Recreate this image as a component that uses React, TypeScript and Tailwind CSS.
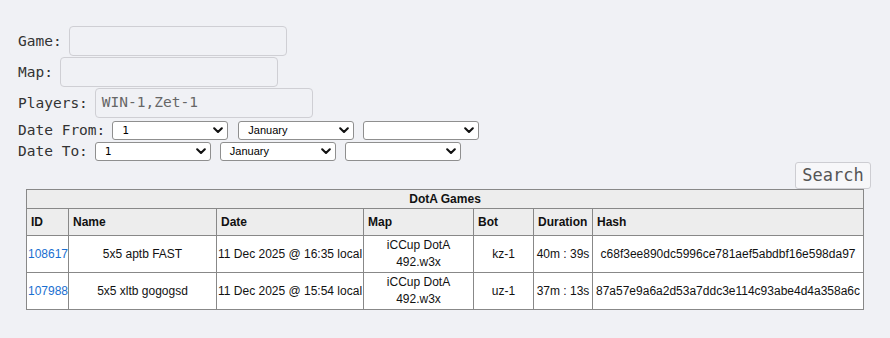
import React from "react";

const mono = "font-['DejaVu_Sans_Mono',monospace]";

function Chevron() {
  return (
    <svg width="10" height="7" viewBox="0 0 10 7" className="shrink-0">
      <path d="M1.2 1.3 L5 5 L8.8 1.3" fill="none" stroke="#111" strokeWidth="2.1" strokeLinecap="round" strokeLinejoin="round" />
    </svg>
  );
}

function FakeSelect({ value, monoText, className }: { value: string; monoText?: boolean; className?: string }) {
  return (
    <div
      className={`flex h-[19px] w-[116px] items-center justify-between rounded-[3px] border border-[#8f8f8f] bg-white pl-[9px] pr-[4px] ${className ?? ""}`}
    >
      <span
        className={
          monoText
            ? "font-['DejaVu_Sans_Mono',monospace] text-[11px] leading-none text-black"
            : "font-['Liberation_Sans',sans-serif] text-[11px] leading-none text-black"
        }
      >
        {value}
      </span>
      <Chevron />
    </div>
  );
}

const rows = [
  {
    id: "108617",
    name: "5x5 aptb FAST",
    date: "11 Dec 2025 @ 16:35 local",
    map: ["iCCup DotA", "492.w3x"],
    bot: "kz-1",
    dur: "40m : 39s",
    hash: "c68f3ee890dc5996ce781aef5abdbf16e598da97",
  },
  {
    id: "107988",
    name: "5x5 xltb gogogsd",
    date: "11 Dec 2025 @ 15:54 local",
    map: ["iCCup DotA", "492.w3x"],
    bot: "uz-1",
    dur: "37m : 13s",
    hash: "87a57e9a6a2d53a7ddc3e114c93abe4d4a358a6c",
  },
];

export default function App() {
  const label = `${mono} text-[14.5px] leading-[17px] text-[#333] whitespace-pre`;
  const input = `${mono} h-[30px] w-[218px] rounded-[4px] border border-[#cfcfd4] bg-[#f0f1f5] px-[6px] text-[14.5px] text-[#666] ml-[7px]`;
  const th = "border border-[#888] px-[4px] py-[4px] text-left font-bold leading-[18px]";
  const td = "border border-[#888] px-[1px] py-[1px] text-center leading-[17px]";
  return (
    <div className="min-h-screen w-full bg-[#f0f1f5]">
      <div className="flex flex-col pl-[18px] pt-[26px]">
        <div className="flex items-center">
          <span className={label}>Game:</span>
          <div className={input} />
        </div>
        <div className="mt-[1px] flex items-center">
          <span className={label}>Map:</span>
          <div className={input} />
        </div>
        <div className="mt-[1px] flex items-center">
          <span className={label}>Players:</span>
          <div className={`${input} flex items-center`}>WIN-1,Zet-1</div>
        </div>
        <div className="mt-[3px] flex items-center">
          <span className={label}>Date From:</span>
          <FakeSelect value="1" monoText className="ml-[7px]" />
          <FakeSelect value="January" className="ml-[10px]" />
          <FakeSelect value="" className="ml-[9px]" />
        </div>
        <div className="mt-[2px] flex items-center">
          <span className={label}>Date To:</span>
          <FakeSelect value="1" monoText className="ml-[7px]" />
          <FakeSelect value="January" className="ml-[9px]" />
          <FakeSelect value="" className="ml-[9px]" />
        </div>
      </div>
      <div className="mt-[1px] flex justify-end pr-[19px]">
        <button
          className={`${mono} h-[27px] w-[76px] rounded-[3px] border border-[#cdcdd2] bg-[#f7f7f9] text-[17px] leading-none text-[#555]`}
        >
          Search
        </button>
      </div>
      <div className="pl-[26px]">
        <table className="w-[837px] table-fixed border-collapse font-['Liberation_Sans',Arial,sans-serif] text-[12px] text-[#111]">
          <colgroup>
            <col className="w-[42px]" />
            <col className="w-[148px]" />
            <col className="w-[147px]" />
            <col className="w-[110px]" />
            <col className="w-[60px]" />
            <col className="w-[59px]" />
            <col className="w-[271px]" />
          </colgroup>
          <thead>
            <tr className="bg-[#ededed]">
              <th colSpan={7} className="border border-[#888] p-0 text-center font-bold leading-[18px]">
                DotA Games
              </th>
            </tr>
            <tr className="bg-[#ededed]">
              <th className={th}>ID</th>
              <th className={th}>Name</th>
              <th className={th}>Date</th>
              <th className={th}>Map</th>
              <th className={th}>Bot</th>
              <th className={th}>Duration</th>
              <th className={th}>Hash</th>
            </tr>
          </thead>
          <tbody>
            {rows.map((r) => (
              <tr key={r.id} className="bg-white">
                <td className={`${td} text-left`}>
                  <a href="#" className="text-[#1a6fd0]">
                    {r.id}
                  </a>
                </td>
                <td className={td}>{r.name}</td>
                <td className={`${td} whitespace-nowrap`}>{r.date}</td>
                <td className={td}>
                  {r.map[0]}
                  <br />
                  {r.map[1]}
                </td>
                <td className={td}>{r.bot}</td>
                <td className={`${td} whitespace-nowrap`}>{r.dur}</td>
                <td className={`${td} whitespace-nowrap`}>{r.hash}</td>
              </tr>
            ))}
          </tbody>
        </table>
      </div>
    </div>
  );
}
